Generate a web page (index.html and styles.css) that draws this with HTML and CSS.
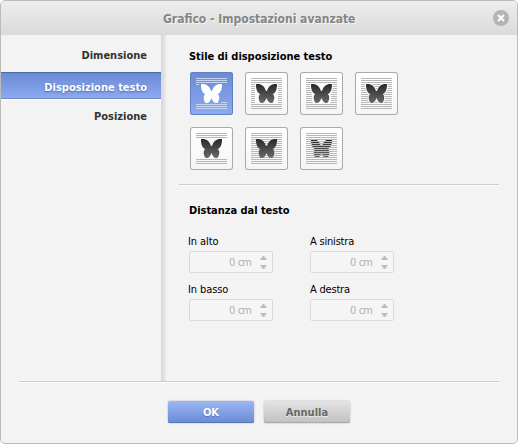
FILE: index.html
```
<!DOCTYPE html>
<html lang="it">
<head>
<meta charset="utf-8">
<title>Grafico - Impostazioni avanzate</title>
<link rel="stylesheet" href="styles.css">
</head>
<body>
<svg class="defs" width="0" height="0">
  <defs>
    <linearGradient id="ink" x1="0" y1="0" x2="0" y2="1"><stop offset="0" stop-color="#292929"/><stop offset="1" stop-color="#6a6a6a"/></linearGradient>
    <path id="bf" d="M11 12.200C15.500 11.300 19.500 14 21 19h1C23.500 14 27.500 11.300 32 12.200C32.200 16 30.800 21.500 27.500 22C30.200 23.500 29.500 28 27.800 30.500C25.500 32.300 22.800 30 21.500 26C20.200 30 17.500 32.300 15.200 30.500C13.500 28 12.800 23.500 15.500 22C12.200 21.500 10.800 16 11 12.200Z"/>
    <path id="top" d="M6 6.500h31M6 8.500h31M6 10.500h31"/>
    <path id="bottom" d="M6 32.500h31M6 34.500h31M6 36.500h31"/>
    <path id="mid" d="M6 12.500h31M6 14.500h31M6 16.500h31M6 18.500h31M6 20.500h31M6 22.500h31M6 24.500h31M6 26.500h31M6 28.500h31M6 30.500h31"/>
  </defs>
</svg>
<div class="dialog">
  <header class="titlebar">
    <h1>Grafico - Impostazioni avanzate</h1>
    <button class="close" aria-label="Chiudi"><svg width="16" height="16" viewBox="0 0 16 16"><circle cx="8" cy="8" r="8" fill="#b4b4b4"/><path d="M5 5l6 6M11 5l-6 6" stroke="#fff" stroke-width="2"/></svg></button>
  </header>
  <div class="body">
    <nav class="menu">
      <a>Dimensione</a>
      <a class="active">Disposizione testo</a>
      <a>Posizione</a>
    </nav>
    <main class="content">
      <section class="wrap-style">
        <h2>Stile di disposizione testo</h2>
        <div class="styles">
          <button class="style selected"><svg width="43" height="43"><g class="lines"><use href="#top"/><path d="M6 12.500h3M31 30.500h6"/><use href="#bottom"/></g><use href="#bf" fill="#fff"/></svg></button>
          <button class="style"><svg width="43" height="43"><g class="lines"><use href="#top"/><use href="#mid"/><use href="#bottom"/></g><path d="M10 11h23v21H10z" fill="#fcfcfc"/><use href="#bf" fill="url(#ink)"/></svg></button>
          <button class="style"><svg width="43" height="43"><g class="lines"><use href="#top"/><use href="#mid"/><use href="#bottom"/></g><path d="M10 12h23v4l-2 6v6l-1 4H13l-1-4v-6l-2-6z" fill="#fcfcfc"/><use href="#bf" fill="url(#ink)"/></svg></button>
          <button class="style"><svg width="43" height="43"><g class="lines"><use href="#top"/><use href="#mid"/><use href="#bottom"/></g><use href="#bf" class="halo"/><use href="#bf" fill="url(#ink)"/></svg></button>
          <button class="style"><svg width="43" height="43"><g class="lines"><use href="#top"/><use href="#bottom"/></g><use href="#bf" fill="url(#ink)"/></svg></button>
          <button class="style"><svg width="43" height="43"><g class="lines"><use href="#top"/><use href="#mid"/><use href="#bottom"/></g><use href="#bf" fill="url(#ink)"/></svg></button>
          <button class="style"><svg width="43" height="43"><use href="#bf" fill="url(#ink)"/><g class="lines"><use href="#top"/><use href="#mid"/><use href="#bottom"/></g></svg></button>
        </div>
      </section>
      <section class="distance">
        <h2>Distanza dal testo</h2>
        <div class="fields">
          <div class="field"><label>In alto</label><div class="spin"><span>0 cm</span><i></i></div></div>
          <div class="field"><label>A sinistra</label><div class="spin"><span>0 cm</span><i></i></div></div>
          <div class="field"><label>In basso</label><div class="spin"><span>0 cm</span><i></i></div></div>
          <div class="field"><label>A destra</label><div class="spin"><span>0 cm</span><i></i></div></div>
        </div>
      </section>
    </main>
  </div>
  <footer class="footer">
    <button class="btn primary">OK</button>
    <button class="btn">Annulla</button>
  </footer>
</div>
</body>
</html>
```
FILE: styles.css
```
* { box-sizing: border-box; margin: 0; padding: 0; }
body { width: 518px; height: 444px; overflow: hidden; background: #fff; font: 11px/14px Tahoma, "DejaVu Sans Condensed", "DejaVu Sans", sans-serif; color: #000; }
.defs { display: block; height: 0; }
button { font: inherit; border: 0; background: none; display: block; }
.dialog { height: 444px; display: flex; flex-direction: column; background: #f3f3f3; border: 1px solid #bbb; border-radius: 5px; overflow: hidden; }
.titlebar { height: 34px; flex: none; display: flex; align-items: center; padding: 0 8px 0 162px; background: linear-gradient(#ededed, #dadada); }
h1 { flex: 1; padding-top: 1px; font-size: 12px; line-height: 16px; color: #858585; text-shadow: 1px 1px 0 #f5f5f5; white-space: nowrap; }
.close svg { display: block; }
.body { height: 346px; flex: none; display: flex; }
.menu { width: 160px; padding-top: 8px; }
.menu a { display: block; height: 24px; padding: 6px 14px 0 0; text-align: right; font-weight: bold; color: #333; white-space: nowrap; }
.menu a.active { height: 27px; margin: 5px 0 5px; padding-top: 8px; color: #fff; background: linear-gradient(#6a8ad4, #8caaf0); border-top: 1px solid #4f68a3; border-bottom: 1px solid #7189c6; box-shadow: 0 1px #fff; text-shadow: 0 1px 2px #4866a8; }
.content { flex: 1; padding: 15px 18px 0 18px; background: linear-gradient(90deg, #dadada, #dcdcdc 2px, #f3f3f3 6px); }
h2 { font-size: 11px; line-height: 14px; margin-left: 10px; letter-spacing: -0.04px; white-space: nowrap; }
.wrap-style { height: 135px; border-bottom: 1px solid #cbcbcb; box-shadow: 0 1px #fff; }
.styles { display: grid; grid-template-columns: repeat(4, 43px); gap: 12px; margin: 8px 0 0 11px; }
.style { width: 43px; height: 43px; border-radius: 3px; background: linear-gradient(#fff, #f5f5f5); box-shadow: inset 0 0 0 1px #aaa; }
.style svg { display: block; }
.style.selected { background: linear-gradient(#6a8ad3, #8dabf3); box-shadow: inset 0 0 0 1px #6180c4; }
.lines { fill: none; stroke: #b8b8b8; stroke-width: 1; }
.selected .lines { stroke: #c6d4f4; }
.halo { fill: #fcfcfc; stroke: #fcfcfc; stroke-width: 2; }
.distance { padding-top: 19px; }
.fields { display: grid; grid-template-columns: 85px 85px; column-gap: 36px; row-gap: 10px; margin: 17px 0 0 10px; }
.field label { display: block; height: 14px; letter-spacing: -0.1px; margin-left: -1px; white-space: nowrap; }
.field:nth-child(even) label { margin-left: 0; letter-spacing: -0.2px; }
.spin { width: 84px; height: 22px; margin-top: 2px; border: 1px solid #dadada; border-radius: 2px; display: flex; align-items: center; justify-content: flex-end; padding-right: 5px; color: #b1b1b1; background: #f5f5f5; }
.spin span { letter-spacing: -0.9px; word-spacing: 1px; padding-top: 2px; }
.spin i { margin-left: 9px; width: 7px; height: 13px; display: flex; flex-direction: column; justify-content: space-between; }
.spin i::before, .spin i::after { content: ""; border: solid transparent; border-width: 0 3.500px 4px; border-bottom-color: #bbb; }
.spin i::after { border-width: 4px 3.500px 0; border-top-color: #bbb; }
.footer { height: 62px; margin: 0 18px; flex: none; display: flex; justify-content: center; gap: 10px; padding-top: 19px; border-top: 1px solid #cbcbcb; box-shadow: inset 0 1px #fff; }
.btn { width: 86px; height: 22px; padding-top: 1px; border-radius: 2px; font-weight: bold; color: #666; text-shadow: 0 1px #eee; background: linear-gradient(#e4e4e4, #c0c0c0); box-shadow: inset 0 -1px #aaa, 0 0 2px #aaa; }
.btn.primary { color: #fff; text-shadow: 0 1px 1px #5875b8; background: linear-gradient(#9bb7f6, #6a8ad2); box-shadow: inset 0 -1px #5875b8, 0 0 2px #aaa; }
```
